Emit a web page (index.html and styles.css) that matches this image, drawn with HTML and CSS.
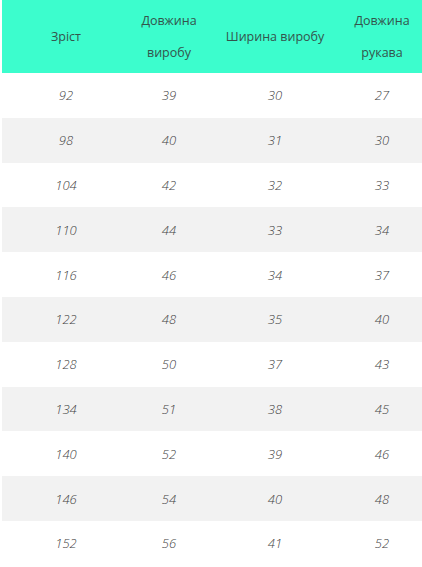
FILE: index.html
```html
<!DOCTYPE html>
<html lang="uk">
<head>
<meta charset="utf-8">
<link rel="stylesheet" href="styles.css">
</head>
<body>
<table class="sizes">
  <colgroup>
    <col class="c1"><col class="c2"><col class="c3"><col class="c4">
  </colgroup>
  <thead>
    <tr><th>Зріст</th><th>Довжина виробу</th><th>Ширина виробу</th><th>Довжина рукава</th></tr>
  </thead>
  <tbody>
    <tr><td>92</td><td>39</td><td>30</td><td>27</td></tr>
    <tr><td>98</td><td>40</td><td>31</td><td>30</td></tr>
    <tr><td>104</td><td>42</td><td>32</td><td>33</td></tr>
    <tr><td>110</td><td>44</td><td>33</td><td>34</td></tr>
    <tr><td>116</td><td>46</td><td>34</td><td>37</td></tr>
    <tr><td>122</td><td>48</td><td>35</td><td>40</td></tr>
    <tr><td>128</td><td>50</td><td>37</td><td>43</td></tr>
    <tr><td>134</td><td>51</td><td>38</td><td>45</td></tr>
    <tr><td>140</td><td>52</td><td>39</td><td>46</td></tr>
    <tr><td>146</td><td>54</td><td>40</td><td>48</td></tr>
    <tr><td>152</td><td>56</td><td>41</td><td>52</td></tr>
  </tbody>
</table>
</body>
</html>
```
FILE: styles.css
```css
html, body {
  margin: 0;
  padding: 0;
  background: #fff;
}
body {
  padding-left: 2px;
  font-family: "Open Sans", "Liberation Sans", sans-serif;
}
.sizes {
  border-collapse: collapse;
  table-layout: fixed;
  width: 420px;
}
.c1 { width: 128px; }
.c2 { width: 78px; }
.c3 { width: 134px; }
.c4 { width: 80px; }
.sizes th {
  background: #3cfdcd;
  color: #34544c;
  font-weight: 400;
  font-size: 12.5px;
  line-height: 32px;
  height: 73px;
  padding: 0;
  text-align: center;
  vertical-align: middle;
}
.sizes td {
  height: 44.8px;
  padding: 0;
  text-align: center;
  vertical-align: middle;
  font-style: italic;
  font-weight: 300;
  font-size: 13px;
  line-height: 16px;
  color: #3f3f3f;
}
.sizes tbody tr:nth-child(even) td {
  background: #f2f2f2;
}
```
